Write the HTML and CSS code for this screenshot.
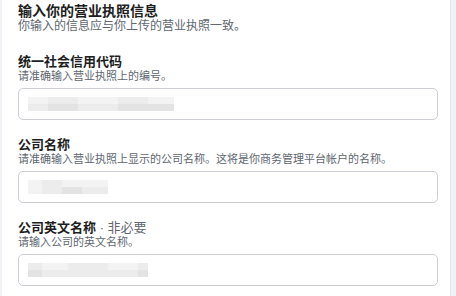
FILE: index.html
```html
<!DOCTYPE html>
<html lang="zh-CN">
<head>
<meta charset="utf-8">
<link rel="stylesheet" href="styles.css">
</head>
<body>
<div class="card">
  <div class="intro">
    <div class="title">输入你的营业执照信息</div>
    <div class="subtitle">你输入的信息应与你上传的营业执照一致。</div>
  </div>
  <div class="field first">
    <div class="label">统一社会信用代码</div>
    <div class="hint">请准确输入营业执照上的编号。</div>
    <div class="input">
      <div class="blur">
        <div class="row"><span class="b1 w20"></span><span class="b2 w30"></span><span class="b1 w40"></span><span class="b2 w30"></span><span class="b1 w26"></span></div>
        <div class="row"><span class="b2 w20"></span><span class="b3 w30"></span><span class="b2 w40"></span><span class="b3 w30"></span><span class="b3 w26"></span></div>
      </div>
    </div>
  </div>
  <div class="field">
    <div class="label">公司名称</div>
    <div class="hint">请准确输入营业执照上显示的公司名称。这将是你商务管理平台帐户的名称。</div>
    <div class="input">
      <div class="blur">
        <div class="row"><span class="b1 w14"></span><span class="b2 w20"></span><span class="b1 w46"></span></div>
        <div class="row"><span class="b1 w14"></span><span class="b2 w20"></span><span class="b3 w20"></span><span class="b2 w26"></span></div>
      </div>
    </div>
  </div>
  <div class="field">
    <div class="label">公司英文名称<span class="optional"> · 非必要</span></div>
    <div class="hint">请输入公司的英文名称。</div>
    <div class="input">
      <div class="blur">
        <div class="row"><span class="b2 w14"></span><span class="b1 w26"></span><span class="b2 w40"></span><span class="b1 w30"></span><span class="b2 w10"></span></div>
        <div class="row"><span class="b3 w14"></span><span class="b2 w26"></span><span class="b2 w40"></span><span class="b2 w30"></span><span class="b3 w10"></span></div>
      </div>
    </div>
  </div>
</div>
</body>
</html>
```
FILE: styles.css
```css
html, body {
  margin: 0;
  padding: 0;
}
body {
  background: #f0f2f5;
  width: 456px;
  height: 296px;
  overflow: hidden;
  font-family: "Liberation Sans", "Noto Sans CJK SC", sans-serif;
  color: #1c1e21;
}
.card {
  margin-left: 2px;
  width: 449px;
  height: 296px;
  background: #ffffff;
  border-right: 1px solid #e4e6eb;
  box-sizing: border-box;
  padding: 3px 12px 0 16px;
}
.title {
  font-size: 14px;
  line-height: 16px;
  font-weight: 700;
}
.subtitle {
  font-size: 12px;
  line-height: 14px;
  color: #606770;
}
.field {
  margin-top: 17px;
}
.field.first {
  margin-top: 21px;
}
.label {
  font-size: 13px;
  line-height: 15px;
  font-weight: 700;
}
.optional {
  font-weight: 400;
  color: #606770;
}
.hint {
  margin-top: 1px;
  font-size: 11px;
  line-height: 13px;
  color: #606770;
}
.input {
  margin-top: 5px;
  height: 32px;
  border: 1px solid #ccd0d5;
  border-radius: 5px;
  box-sizing: border-box;
  padding: 8px 9px;
}
.blur {
  display: flex;
  flex-direction: column;
  filter: blur(0.6px);
}
.row {
  display: flex;
  height: 7px;
}
.row span {
  display: block;
  height: 7px;
}
.b1 { background: #f3f3f3; }
.b2 { background: #ececec; }
.b3 { background: #e3e3e3; }
.w10 { width: 10px; }
.w14 { width: 14px; }
.w20 { width: 20px; }
.w26 { width: 26px; }
.w30 { width: 30px; }
.w40 { width: 40px; }
.w46 { width: 46px; }
```
